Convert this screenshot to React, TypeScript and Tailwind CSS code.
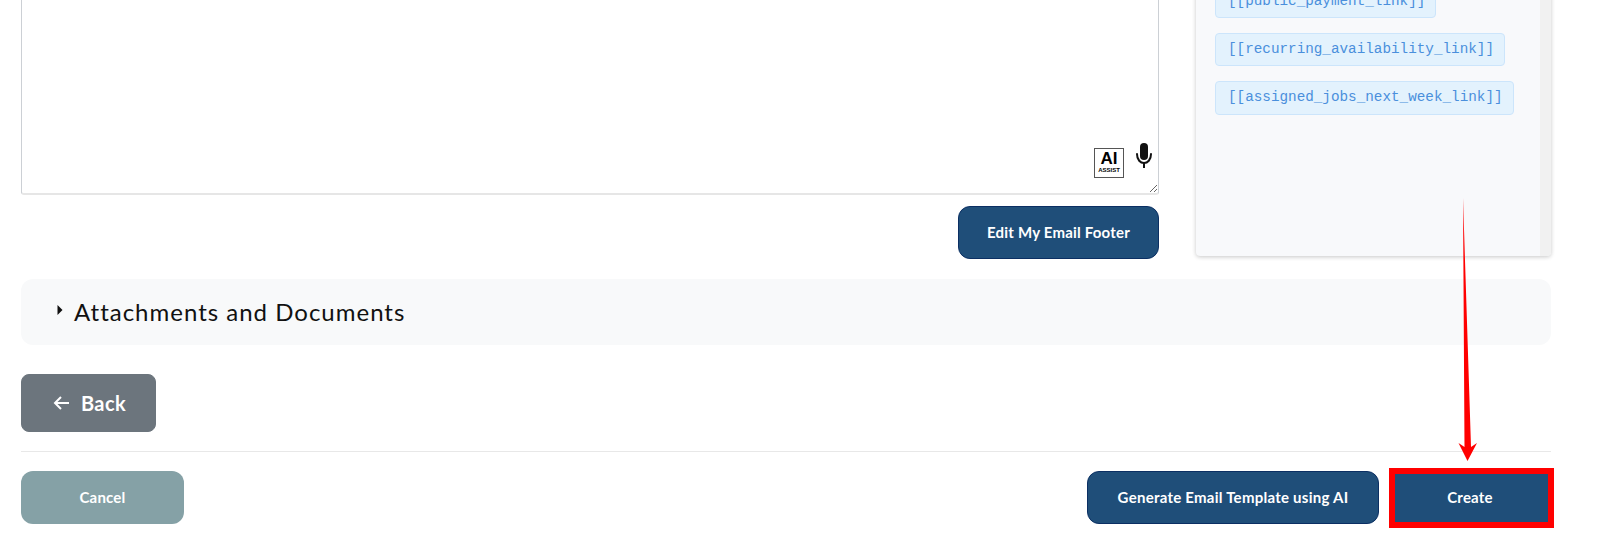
export default function App() {
  const font = { fontFamily: '"Lato", "Noto Sans", sans-serif' };
  return (
    <div className="relative h-[548px] w-[1600px] overflow-hidden bg-white" style={font}>
      <div className="flex flex-col pl-[21px] pr-[49px]">
        <div className="flex h-[279px] gap-[37px]">
          <div className="flex w-[1138px] flex-col items-end">
            <div className="relative h-[195px] w-full">
              <textarea aria-label="Email body" className="block h-full w-full resize-y rounded-b-[3px] border border-t-0 border-[#ccd0d5] border-b-[2px] border-b-[#e6e6e6] bg-white outline-none" />
              <div className="absolute bottom-[17px] right-[35px] flex h-[30px] w-[30px] flex-col items-center border border-[#555] bg-white leading-none text-black">
                <span className="mt-[1px] font-['Liberation_Sans',sans-serif] text-[17px] font-bold leading-[17px]">AI</span>
                <span className="font-['Liberation_Sans',sans-serif] text-[6px] font-bold leading-[7px]">ASSIST</span>
              </div>
              <svg className="absolute bottom-[26px] right-[3px]" width="24" height="27" viewBox="0 0 24 27">
                <rect x="8" y="1" width="8" height="17" rx="4" fill="#111" />
                <path d="M5 12 C5 24 19 24 19 12" fill="none" stroke="#111" strokeWidth="2" strokeLinecap="round" />
                <path d="M12 21 V26" stroke="#111" strokeWidth="2" />
              </svg>
            </div>
            <button className="mt-[11px] flex h-[53px] w-[201px] items-center justify-center rounded-[12px] border border-[#0b2f63] bg-[#1f4e79] text-[15px] font-bold tracking-[0.2px] text-white">
              Edit My Email Footer
            </button>
          </div>
          <div className="-mt-[10px] flex h-[266px] w-[355px] overflow-hidden rounded-b-[4px] bg-[#f8f9fb] shadow-[0_1px_4px_rgba(0,0,0,0.22)]">
            <div className="flex min-w-0 flex-1 flex-col items-start gap-[15px] pl-[19px] font-['Liberation_Mono',monospace] text-[14.3px] text-[#4a8fdc]">
              <div className="-mt-[5px] flex h-[33px] items-center rounded-[4px] border border-[#cce5fb] bg-[#e3f2fd] pl-[12px] pr-[10px]">[[public_payment_link]]</div>
              <div className="flex h-[33px] items-center rounded-[4px] border border-[#cce5fb] bg-[#e3f2fd] pl-[12px] pr-[10px]">[[recurring_availability_link]]</div>
              <div className="flex h-[34px] items-center rounded-[4px] border border-[#cce5fb] bg-[#e3f2fd] pl-[12px] pr-[10px]">[[assigned_jobs_next_week_link]]</div>
            </div>
            <div className="w-[11px] bg-[#f1f1f1]" />
          </div>
        </div>

        <div className="flex h-[66px] w-[1530px] items-center rounded-[12px] bg-[#f8f9fa] pl-[36px] text-[24px] tracking-[1px] text-[#111]">
          <svg className="-mt-[4px] mr-[11px]" width="6" height="10" viewBox="0 0 6 10"><path d="M0.5 0 L5.5 5 L0.5 10 Z" fill="#111" /></svg>
          Attachments and Documents
        </div>

        <button className="mt-[29px] flex h-[58px] w-[135px] items-center justify-center gap-[11px] rounded-[8px] border border-[#6c757d] bg-[#6c757d] pl-[2px] text-[20px] font-bold tracking-[0.4px] text-white">
          <svg width="17" height="14" viewBox="0 0 17 14" fill="none" stroke="white" strokeWidth="2"><path d="M16 7 H2 M8 1 L2 7 L8 13" /></svg>
          Back
        </button>

        <div className="mt-[19px] h-px w-[1530px] bg-[#e8e8e8]" />

        <div className="mt-[19px] flex w-[1530px] items-center">
          <button className="flex h-[53px] w-[163px] items-center justify-center rounded-[12px] bg-[#85a1a6] text-[15px] font-bold tracking-[0.2px] text-white">Cancel</button>
          <button className="ml-auto flex h-[53px] w-[292px] items-center justify-center rounded-[12px] border border-[#0b2f63] bg-[#1f4e79] text-[15px] font-bold tracking-[0.25px] text-white">Generate Email Template using AI</button>
          <button className="ml-[16px] mr-[3px] flex h-[48px] w-[153px] items-center justify-center bg-[#1f4e79] pr-[3px] text-[15px] font-bold tracking-[0.2px] text-white outline-[6px] outline-[#ff0000]">Create</button>
        </div>
      </div>

      <svg className="absolute left-[1455px] top-[195px]" width="24" height="270" viewBox="0 0 24 270">
        <path d="M8 3 L9.5 252 L3.5 248 L12.5 266 L22 248 L16 252 Z" fill="#ff0000" />
      </svg>
    </div>
  );
}
